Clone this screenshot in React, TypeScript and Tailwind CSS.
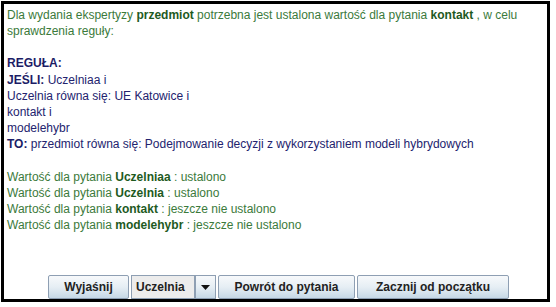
import React from 'react';

const G = ({ children }: { children: React.ReactNode }) => (
  <b className="font-bold text-[#1e5a1e]">{children}</b>
);

const N = ({ children }: { children: React.ReactNode }) => (
  <b className="font-bold text-[#1c1c66]">{children}</b>
);

const Btn = ({ label, w }: { label: string; w: string }) => (
  <button
    className={`${w} h-[24px] border border-[#8e9fb3] rounded-[2px] bg-gradient-to-b from-[#f7f9fb] via-[#e6eef4] to-[#c6d8e6] text-[12px] font-bold text-[#222]`}
  >
    {label}
  </button>
);

export default function App() {
  return (
    <div className="w-[556px] h-[307px] bg-white pl-[1px] pt-[1px] font-['Liberation_Sans',Arial,sans-serif]">
      <div className="w-[549px] h-[301px] border-[3px] border-black flex flex-col">
        <div className="flex-1 pl-[3px] pt-[3px] text-[12px] leading-[16.15px] whitespace-nowrap">
          <div className="text-[#3b7a3b]">
            Dla wydania ekspertyzy <G>przedmiot</G> potrzebna jest ustalona wartość dla pytania <G>kontakt</G> , w celu
          </div>
          <div className="text-[#3b7a3b]">sprawdzenia reguły:</div>
          <div>&nbsp;</div>
          <div className="text-[#23236e]">
            <div><N>REGUŁA:</N></div>
            <div><N>JEŚLI:</N> Uczelniaa i</div>
            <div>Uczelnia równa się: UE Katowice i</div>
            <div>kontakt i</div>
            <div>modelehybr</div>
            <div><N>TO:</N> przedmiot równa się: Podejmowanie decyzji z wykorzystaniem modeli hybrydowych</div>
          </div>
          <div>&nbsp;</div>
          <div className="text-[#3b7a3b]">
            <div>Wartość dla pytania <G>Uczelniaa</G> : ustalono</div>
            <div>Wartość dla pytania <G>Uczelnia</G> : ustalono</div>
            <div>Wartość dla pytania <G>kontakt</G> : jeszcze nie ustalono</div>
            <div>Wartość dla pytania <G>modelehybr</G> : jeszcze nie ustalono</div>
          </div>
        </div>
        <div className="flex items-end pl-[44px] gap-[2px]">
          <Btn label="Wyjaśnij" w="w-[81px]" />
          <div className="flex h-[24px]">
            <div className="w-[64px] h-full border border-[#8e9fb3] bg-[#ececec] text-[12px] font-bold text-[#222] pl-[4px] flex items-center">
              Uczelnia
            </div>
            <div className="w-[21px] h-full border border-[#8e9fb3] bg-gradient-to-b from-[#f7f9fb] via-[#e6eef4] to-[#c6d8e6] flex items-center justify-center">
              <svg width="9" height="5" viewBox="0 0 9 5">
                <path d="M0 0 H9 L4.5 5 Z" fill="#111" />
              </svg>
            </div>
          </div>
          <Btn label="Powrót do pytania" w="w-[137px]" />
          <Btn label="Zacznij od początku" w="w-[152px]" />
        </div>
      </div>
    </div>
  );
}
